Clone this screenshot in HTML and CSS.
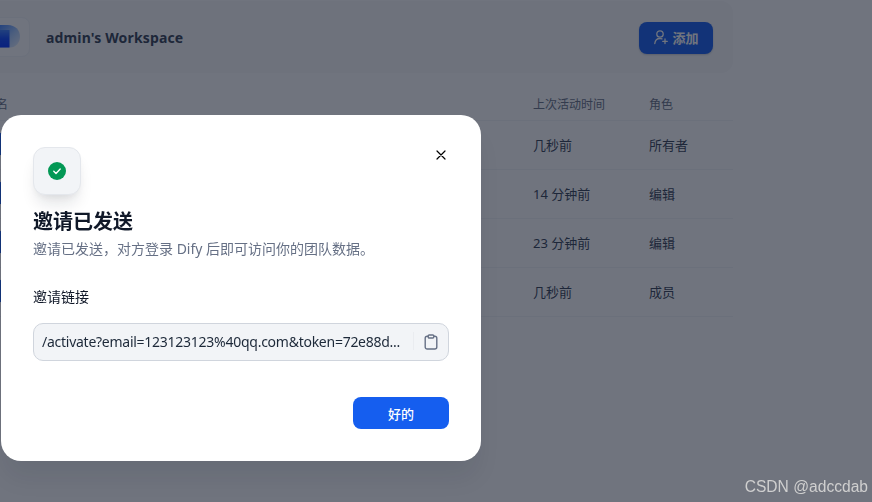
FILE: index.html
```html
<!DOCTYPE html>
<html lang="zh">
<head>
<meta charset="utf-8">
<title>邀请已发送</title>
<link rel="stylesheet" href="styles.css">
</head>
<body>
<main class="page">
  <section class="workspace">
    <div class="logo">
      <svg class="logo-mark" width="24" height="24" viewBox="0 0 24 24"><defs><linearGradient id="lobe" x1="0" y1="0" x2="1" y2="1"><stop offset="0" stop-color="#3b7fff"/><stop offset=".55" stop-color="#a8cbff"/><stop offset="1" stop-color="#eef4ff"/></linearGradient><linearGradient id="stem" x1="0" y1="0" x2="0" y2="1"><stop offset="0" stop-color="#3b7fff"/><stop offset=".5" stop-color="#0a45ff"/><stop offset="1" stop-color="#0030ff"/></linearGradient></defs><path d="M0 0h10c7 0 12 5 12 11.500 0 6-4 11-10 11H0z" fill="url(#lobe)"/><path d="M0 5h11.500v17.500H0z" fill="url(#stem)"/></svg>
    </div>
    <h2 class="workspace-name">admin's Workspace</h2>
    <button class="add-btn">
      <svg width="16" height="16" viewBox="0 0 16 16" fill="none" stroke="currentColor" stroke-width="1.300" stroke-linecap="round"><circle cx="7" cy="5" r="3.200"/><path d="M1.800 14.500c.3-3 2.300-5 5.200-5 .8 0 1.400.1 2 .4M12 10v4.600M9.700 12.300h4.600"/></svg>
      <span>添加</span>
    </button>
  </section>
  <div class="table">
    <div class="thead row-grid">
      <div class="name-head">姓名</div><div>上次活动时间</div><div>角色</div>
    </div>
    <div class="row row-grid"><div class="name-cell"><span class="avatar"></span></div><div>几秒前</div><div>所有者</div></div>
    <div class="row row-grid"><div class="name-cell"><span class="avatar"></span></div><div>14 分钟前</div><div>编辑</div></div>
    <div class="row row-grid"><div class="name-cell"><span class="avatar"></span></div><div>23 分钟前</div><div>编辑</div></div>
    <div class="row row-grid"><div class="name-cell"><span class="avatar"></span></div><div>几秒前</div><div>成员</div></div>
  </div>
</main>
<div class="overlay"></div>
<section class="modal">
  <button class="close" aria-label="关闭">
    <svg width="12" height="12" viewBox="0 0 12 12" fill="none" stroke="#000" stroke-width="1.200" stroke-linecap="round"><path d="M2 2l8 8M10 2l-8 8"/></svg>
  </button>
  <div class="check-box">
    <svg width="18" height="18" viewBox="0 0 18 18"><circle cx="9" cy="9" r="9" fill="#039855"/><path d="M5.800 9.300l2.200 2.100 4.200-4.400" fill="none" stroke="#fff" stroke-width="1.400" stroke-linecap="round" stroke-linejoin="round"/></svg>
  </div>
  <h1 class="title">邀请已发送</h1>
  <p class="subtitle">邀请已发送，对方登录 Dify 后即可访问你的团队数据。</p>
  <div class="label">邀请链接</div>
  <div class="link-box">
    <span class="link-text">/activate?email=123123123%40qq.com&amp;token=72e88d...</span>
    <span class="divider"></span>
    <svg class="copy" width="14" height="16" viewBox="0 0 14 16" fill="none" stroke="#667085" stroke-width="1.400" stroke-linejoin="round"><rect x="1.200" y="2.200" width="11.600" height="12.800" rx="2"/><rect x="4.200" y="1" width="5.600" height="3" rx="1" fill="#f2f4f7"/></svg>
  </div>
  <div class="actions"><button class="ok">好的</button></div>
</section>
<div class="watermark">CSDN @adccdab</div>
</body>
</html>
```
FILE: styles.css
```css
* { box-sizing: border-box; }
html, body { margin: 0; height: 100%; overflow: hidden; }
body {
  background: #fff;
  font-family: "Noto Sans", "Noto Sans CJK SC", sans-serif;
  color: #344054;
  font-size: 13px;
}
.page {
  width: 767px;
  margin-left: -34px;
  padding-top: 1px;
  border-top: 1px solid #eaecf0;
  margin-top: -1px;
}
.workspace {
  height: 72px;
  padding: 16px 20px 16px 24px;
  display: flex;
  align-items: center;
  gap: 16px;
  background: #f9fafb;
  border-radius: 12px;
}
.logo {
  width: 40px;
  height: 40px;
  flex: none;
  border-radius: 8px;
  background: #fff;
  border: 1px solid #f2f4f7;
  display: flex;
  align-items: center;
  justify-content: center;
}
.logo-mark { flex: none; display: block; }
.workspace-name {
  flex: 1;
  margin: 2px 0 0;
  font-size: 14px;
  line-height: 20px;
  font-weight: 700;
  letter-spacing: .15px;
  color: #344054;
}
.add-btn {
  width: 74px;
  height: 32px;
  margin-top: 2px;
  padding: 0 0 2px;
  border: 0;
  border-radius: 8px;
  background: #155eef;
  color: #fff;
  display: flex;
  align-items: center;
  justify-content: center;
  gap: 3px;
  font: 600 13px "Noto Sans", "Noto Sans CJK SC", sans-serif;
  box-shadow: 0 1px 2px rgba(16, 24, 40, .2);
}
.table { margin-top: 16px; }
.row-grid {
  display: grid;
  grid-template-columns: 1fr 116px 84px;
  align-items: center;
}
.thead {
  height: 32px;
  padding-bottom: 2px;
  font-size: 12px;
  color: #667085;
  border-bottom: 1px solid #f2f4f7;
}
.name-head { padding-left: 18px; }
.row {
  height: 49px;
  padding-bottom: 2px;
  color: #344054;
  border-bottom: 1px solid #f2f4f7;
}
.name-cell { padding-left: 18px; display: flex; }
.avatar {
  width: 24px;
  height: 24px;
  border-radius: 50%;
  background: #155eef;
}
.overlay {
  position: fixed;
  inset: 0;
  background: rgba(16, 24, 40, .6);
}
.modal {
  position: absolute;
  left: 1px;
  top: 115px;
  width: 480px;
  height: 346px;
  padding: 32px;
  background: #fff;
  border-radius: 20px;
  box-shadow: 0 20px 24px -4px rgba(16, 24, 40, .08);
}
.close {
  position: absolute;
  top: 34px;
  right: 34px;
  width: 12px;
  height: 12px;
  padding: 0;
  border: 0;
  background: none;
  display: flex;
}
.check-box {
  width: 48px;
  height: 48px;
  border-radius: 12px;
  background: #f2f4f7;
  border: 1px solid #e4e7ec;
  box-shadow: 0 12px 16px -4px rgba(16, 24, 40, .12), 0 4px 6px -2px rgba(16, 24, 40, .05);
  display: flex;
  align-items: center;
  justify-content: center;
}
.title {
  margin: 13px 0 0;
  font-size: 20px;
  line-height: 28px;
  font-weight: 700;
  color: #101828;
}
.subtitle {
  margin: 3px 0 0;
  font-size: 14px;
  line-height: 20px;
  color: #667085;
}
.label {
  margin-top: 28px;
  font-size: 14px;
  line-height: 20px;
  color: #101828;
}
.link-box {
  margin-top: 16px;
  height: 38px;
  padding: 0 10px 2px 8px;
  display: flex;
  align-items: center;
  background: #f2f4f7;
  border: 1px solid #d0d5dd;
  border-radius: 10px;
}
.link-text {
  flex: 1;
  font-size: 14px;
  letter-spacing: -.26px;
  color: #1d2939;
  white-space: nowrap;
}
.divider {
  width: 1px;
  height: 18px;
  background: #eaecf0;
  margin-right: 10px;
}
.copy { display: block; margin-top: 2px; }
.actions {
  margin-top: 36px;
  display: flex;
  justify-content: flex-end;
}
.ok {
  width: 96px;
  height: 32px;
  border: 0;
  border-radius: 8px;
  background: #155eef;
  color: #fff;
  font: 500 13px "Noto Sans", "Noto Sans CJK SC", sans-serif;
}
.watermark {
  position: absolute;
  right: 4px;
  bottom: 5px;
  font: 15.600px/20px "Liberation Sans", sans-serif;
  color: #cfcfcf;
}
```
